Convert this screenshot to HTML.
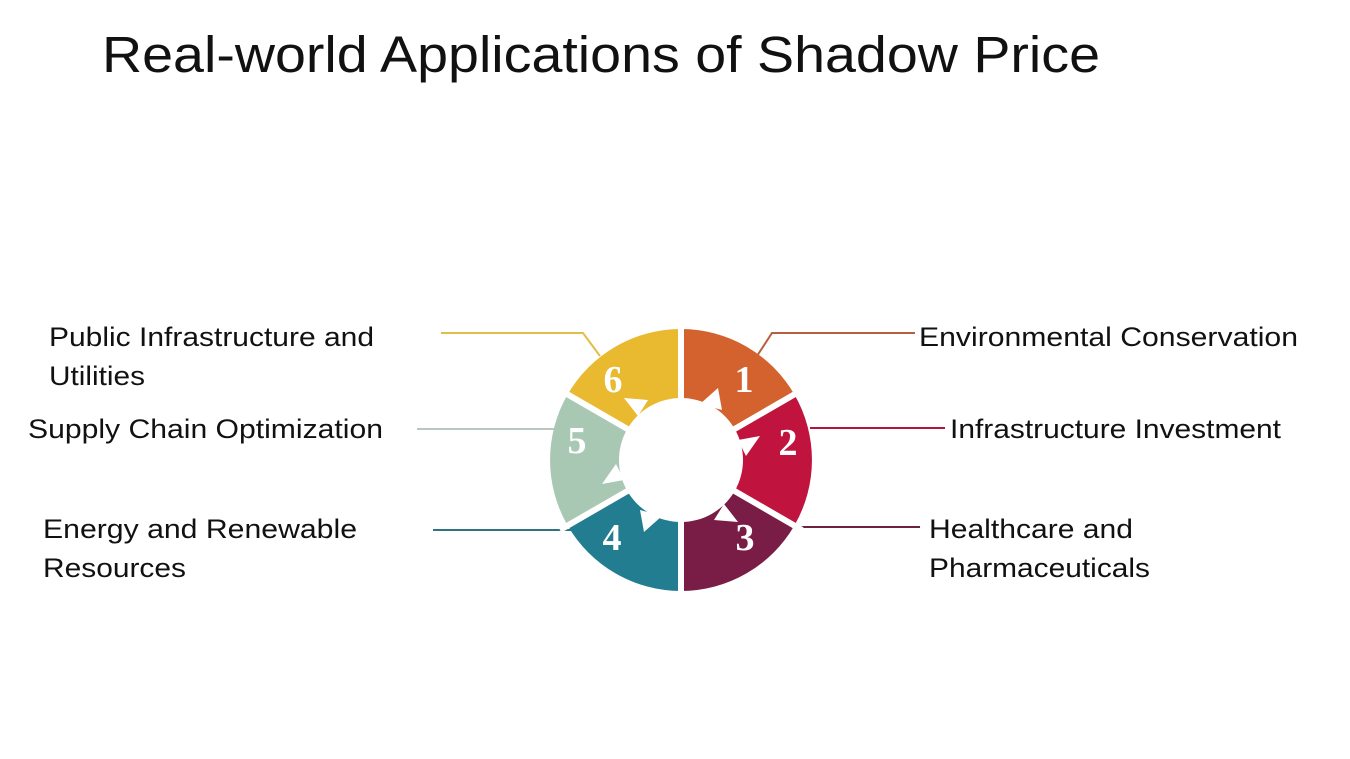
<!DOCTYPE html>
<html><head><meta charset="utf-8"><style>
html,body{margin:0;padding:0;background:#fff;}
body{width:1350px;height:759px;overflow:hidden;}
</style></head><body>
<svg width="1350" height="759" xmlns="http://www.w3.org/2000/svg" style="display:block">
<text x="102" y="72" font-family="Liberation Sans, sans-serif" font-size="51" fill="#111" textLength="998" lengthAdjust="spacingAndGlyphs">Real-world Applications of Shadow Price</text>
<g fill="none" stroke-width="2">
<polyline points="441,333 583,333 600,356" stroke="#e2bd48"/>
<polyline points="915,333 772,333 757,356" stroke="#b4603e"/>
<polyline points="417,429 555,429" stroke="#b7c8be"/>
<polyline points="945,428 810,428" stroke="#b3163d"/>
<polyline points="433,530 575,530" stroke="#2e7283"/>
<polyline points="920,527 790,527" stroke="#6e2140"/>
</g>
<path d="M681,329 A131,131 0 0 1 794.4,394.5 L734.7,429 A62,62 0 0 0 681,398 Z" fill="#d3622f"/>
<path d="M794.4,394.5 A131,131 0 0 1 794.4,525.5 L734.7,491 A62,62 0 0 0 734.7,429 Z" fill="#c0133d"/>
<path d="M794.4,525.5 A131,131 0 0 1 681,591 L681,522 A62,62 0 0 0 734.7,491 Z" fill="#7a1d46"/>
<path d="M681,591 A131,131 0 0 1 567.6,525.5 L627.3,491 A62,62 0 0 0 681,522 Z" fill="#237d91"/>
<path d="M567.6,525.5 A131,131 0 0 1 567.6,394.5 L627.3,429 A62,62 0 0 0 627.3,491 Z" fill="#a9c8b4"/>
<path d="M567.6,394.5 A131,131 0 0 1 681,329 L681,398 A62,62 0 0 0 627.3,429 Z" fill="#e9b930"/>
<g stroke="#fff" stroke-width="6">
<line x1="681" y1="460" x2="681" y2="320"/>
<line x1="681" y1="460" x2="681" y2="600"/>
<line x1="681" y1="460" x2="802" y2="390"/>
<line x1="681" y1="460" x2="802" y2="530"/>
<line x1="681" y1="460" x2="560" y2="390"/>
<line x1="681" y1="460" x2="560" y2="530"/>
</g>
<circle cx="681" cy="460" r="60" fill="#fff"/>
<g fill="#fff">
<polygon points="700,404 718,388 722,410"/>
<polygon points="738,440 760,436 746,456"/>
<polygon points="724,504 738,522 714,520"/>
<polygon points="662,516 644,532 640,510"/>
<polygon points="624,480 602,484 616,464"/>
<polygon points="638,416 624,398 648,400"/>
</g>
<g font-family="Liberation Serif, serif" font-size="38" font-weight="bold" fill="#fff" text-anchor="middle">
<text x="744" y="392">1</text>
<text x="788" y="455">2</text>
<text x="745" y="550">3</text>
<text x="612" y="550">4</text>
<text x="577" y="453">5</text>
<text x="613" y="392">6</text>
</g>
<g font-family="Liberation Sans, sans-serif" font-size="27" fill="#111" lengthAdjust="spacingAndGlyphs">
<text x="49" y="346" textLength="325" lengthAdjust="spacingAndGlyphs">Public Infrastructure and</text>
<text x="49" y="385" textLength="96" lengthAdjust="spacingAndGlyphs">Utilities</text>
<text x="28" y="438" textLength="355" lengthAdjust="spacingAndGlyphs">Supply Chain Optimization</text>
<text x="43" y="538" textLength="314" lengthAdjust="spacingAndGlyphs">Energy and Renewable</text>
<text x="43" y="577" textLength="143" lengthAdjust="spacingAndGlyphs">Resources</text>
<text x="919" y="346" textLength="379" lengthAdjust="spacingAndGlyphs">Environmental Conservation</text>
<text x="950" y="438" textLength="331" lengthAdjust="spacingAndGlyphs">Infrastructure Investment</text>
<text x="929" y="538" textLength="204" lengthAdjust="spacingAndGlyphs">Healthcare and</text>
<text x="929" y="577" textLength="221" lengthAdjust="spacingAndGlyphs">Pharmaceuticals</text>
</g>
</svg>
</body></html>
